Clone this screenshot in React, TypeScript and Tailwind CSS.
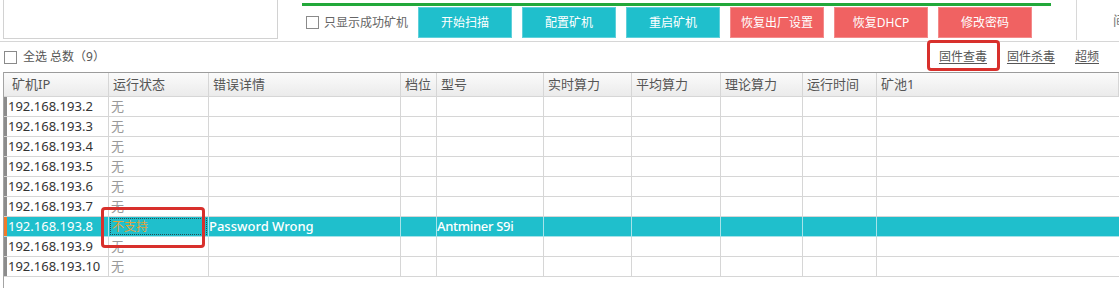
const buttons = [
    { label: "开始扫描", tone: "teal" },
    { label: "配置矿机", tone: "teal" },
    { label: "重启矿机", tone: "teal" },
    { label: "恢复出厂设置", tone: "red" },
    { label: "恢复DHCP", tone: "red" },
    { label: "修改密码", tone: "red" },
];

const headers = ["矿机IP", "运行状态", "错误详情", "档位", "型号", "实时算力", "平均算力", "理论算力", "运行时间", "矿池1"];

const rows = [2, 3, 4, 5, 6, 7, 8, 9, 10].map((n) => ({
    ip: `192.168.193.${n}`,
    selected: n === 8,
}));

const grid = "grid grid-cols-[105px_100px_192px_36px_107px_88px_89px_82px_74px_1fr]";

const Checkbox = () => <div className="shrink-0 w-[13px] h-[13px] border border-[#8a8a8a] bg-white" />;

const App = () => {
    return (
        <div className="relative w-[1119px] h-[288px] overflow-hidden bg-white text-[13px] font-['Noto_Sans','Noto_Sans_CJK_SC',sans-serif]">
            {/* top toolbar */}
            <div className="flex h-[42px] border-b border-[#d6d6d6]">
                <div className="shrink-0 ml-[3px] w-[275px] h-[39px] border border-t-0 border-[#d2d2d2]" />
                <div className="shrink-0 ml-[24px] w-[749px] flex flex-col">
                    <div className="mt-[3px] h-[3px] bg-[#22a83a]" />
                    <div className="mt-px flex items-center">
                        <div className="w-[116px] flex items-center pl-[4px]">
                            <Checkbox />
                            <span className="ml-[5px] text-[12px] text-[#666] whitespace-nowrap">只显示成功矿机</span>
                        </div>
                        <div className="flex gap-[10px]">
                            {buttons.map((b) => (
                                <div
                                    key={b.label}
                                    className={
                                        b.tone === "teal"
                                            ? "w-[94px] h-[31px] flex items-center justify-center text-[12px] text-white bg-[#1fbfcc] border border-[#5fd0da]"
                                            : "w-[94px] h-[31px] flex items-center justify-center text-[12px] text-white bg-[#f06262] border border-[#f48a8a]"
                                    }
                                >
                                    {b.label}
                                </div>
                            ))}
                        </div>
                    </div>
                </div>
                <div className="shrink-0 ml-[25px] w-px h-[40px] bg-[#d8d8d8]" />
                <div className="shrink-0 ml-[36px] pt-[11px] text-[13px] text-[#777] whitespace-nowrap">间隔</div>
            </div>

            {/* select all + links */}
            <div className="flex items-center h-[30px]">
                <div className="ml-[4px] flex items-center">
                    <Checkbox />
                    <span className="ml-[6px] text-[12px] text-[#555]">全选 总数（9）</span>
                </div>
                <div className="ml-auto mr-[20px] flex gap-[20px] text-[12px] text-[#555]">
                    <span className="underline underline-offset-2">固件查毒</span>
                    <span className="underline underline-offset-2">固件杀毒</span>
                    <span className="underline underline-offset-2">超频</span>
                </div>
            </div>

            {/* table */}
            <div className="ml-[3px] h-[216px] border-l border-[#a4a4a4]">
                <div className={`${grid} border-t border-[#9c9c9c]`}>
                    {headers.map((h, i) => (
                        <div
                            key={h}
                            className={
                                i === 0
                                    ? "h-[24px] flex items-center pl-[8px] text-[#555] border-r border-b border-[#d6d6d6] bg-gradient-to-b from-[#fbfbfb] to-[#ebebeb]"
                                    : "h-[24px] flex items-center pl-[4px] text-[#555] border-r border-b border-[#d6d6d6] bg-gradient-to-b from-[#fbfbfb] to-[#ebebeb]"
                            }
                        >
                            {h}
                        </div>
                    ))}
                </div>
                {rows.map((r) =>
                    r.selected ? (
                        <div key={r.ip} className={`${grid} h-[20px] bg-[#1fbfcc] text-white`}>
                            <div className="flex items-stretch border-r border-b border-[#a6e3e9]">
                                <div className="w-[3px] bg-[#f07a2a]" />
                                <span className="pl-px leading-[19px]">{r.ip}</span>
                            </div>
                            <div className="border-r border-b border-[#a6e3e9] p-px">
                                <div className="h-[17px] border border-dotted border-[#2a4a50] text-[12px] text-[#e3a33a] leading-[15px] pl-px">
                                    不支持
                                </div>
                            </div>
                            <div className="border-r border-b border-[#a6e3e9] leading-[19px] font-medium">Password Wrong</div>
                            <div className="border-r border-b border-[#a6e3e9]" />
                            <div className="border-r border-b border-[#a6e3e9] leading-[19px] font-medium tracking-[-0.3px]">Antminer S9i</div>
                            <div className="border-r border-b border-[#a6e3e9]" />
                            <div className="border-r border-b border-[#a6e3e9]" />
                            <div className="border-r border-b border-[#a6e3e9]" />
                            <div className="border-r border-b border-[#a6e3e9]" />
                            <div className="border-b border-[#a6e3e9]" />
                        </div>
                    ) : (
                        <div key={r.ip} className={`${grid} h-[20px]`}>
                            <div className="flex items-stretch border-r border-b border-[#d6d6d6]">
                                <div className="w-[3px] bg-[#8c8c8c]" />
                                <span className="pl-px leading-[19px] text-[#333]">{r.ip}</span>
                            </div>
                            <div className="border-r border-b border-[#d6d6d6] pl-[2px] leading-[19px] text-[#999]">无</div>
                            <div className="border-r border-b border-[#d6d6d6]" />
                            <div className="border-r border-b border-[#d6d6d6]" />
                            <div className="border-r border-b border-[#d6d6d6]" />
                            <div className="border-r border-b border-[#d6d6d6]" />
                            <div className="border-r border-b border-[#d6d6d6]" />
                            <div className="border-r border-b border-[#d6d6d6]" />
                            <div className="border-r border-b border-[#d6d6d6]" />
                            <div className="border-b border-[#d6d6d6]" />
                        </div>
                    )
                )}
            </div>

            {/* red annotation boxes */}
            <div className="absolute left-[927px] top-[40px] w-[73px] h-[31px] border-[3px] border-[#d8302c] rounded-[4px]" />
            <div className="absolute left-[101px] top-[207px] w-[104px] h-[41px] border-[3px] border-[#d8302c] rounded-[4px]" />
        </div>
    );
};

export default App;
